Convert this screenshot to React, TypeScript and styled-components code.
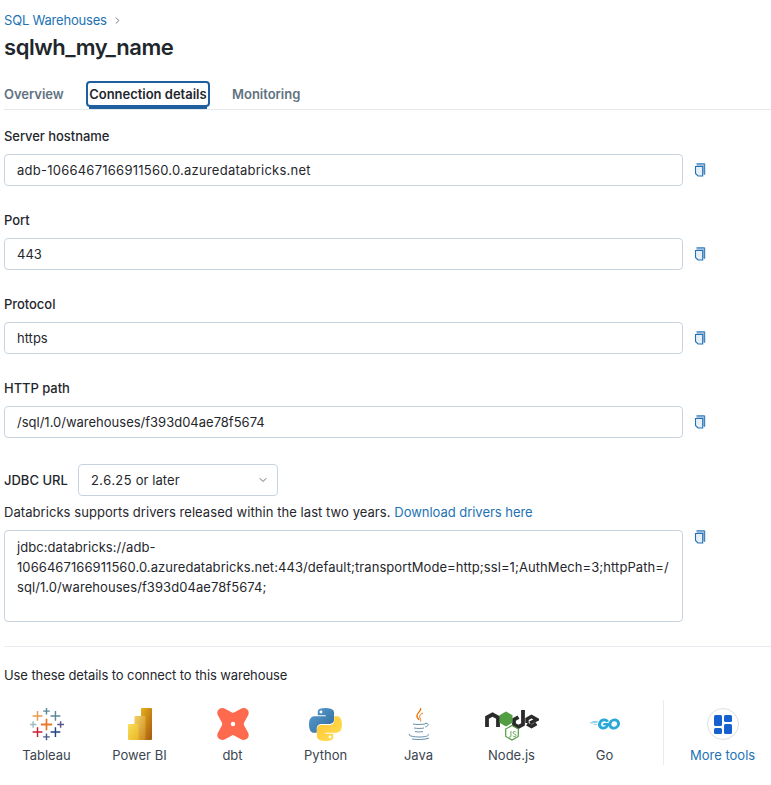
import React from "react";
import styled, { createGlobalStyle } from "styled-components";
import { SiGo } from "react-icons/si";
import { LuChevronDown, LuChevronRight } from "react-icons/lu";

const GlobalStyle = createGlobalStyle`
  body {
    margin: 0;
    background: #fff;
    font-family: Inter, "Liberation Sans", sans-serif;
    font-size: 13px;
    color: #1f272d;
  }
`;

const Page = styled.div`
  width: 771px;
  height: 785px;
  box-sizing: border-box;
  padding: 10px 0 0 4px;
  overflow: hidden;
`;

const Crumbs = styled.div`
  display: flex;
  align-items: center;
  gap: 5px;
  height: 20px;
  line-height: 20px;
  letter-spacing: -0.2px;
  color: #2272b4;
  svg {
    color: #5f7281;
  }
`;

const Title = styled.h1`
  margin: 3px 0 0;
  font-size: 22px;
  line-height: 28px;
  font-weight: 600;
  letter-spacing: -0.45px;
  color: #1f272d;
`;

const Tabs = styled.div`
  display: flex;
  gap: 25.5px;
  height: 29px;
  margin-top: 19px;
  border-bottom: 1px solid #e4e9ed;
`;

const Tab = styled.div<{ $active?: boolean }>`
  position: relative;
  height: 29px;
  line-height: 28px;
  font-weight: 600;
  letter-spacing: -0.02px;
  color: ${(p) => (p.$active ? "#1f272d" : "#5f7281")};
  ${(p) =>
    p.$active &&
    `
    &::before {
      content: "";
      position: absolute;
      left: -3px;
      right: -3px;
      top: 1px;
      height: 26px;
      box-sizing: border-box;
      border: 2px solid #1f5fa0;
      border-radius: 4px;
    }
    &::after {
      content: "";
      position: absolute;
      left: 0;
      right: 0;
      bottom: 0;
      height: 3px;
      background: #1f5fa0;
    }
  `}
`;

const Form = styled.div`
  margin-top: 16px;
`;

const Field = styled.div`
  margin-bottom: 24px;
`;

const Label = styled.div`
  line-height: 20px;
  font-weight: 500;
  letter-spacing: -0.05px;
  margin-bottom: 8px;
`;

const Row = styled.div`
  display: flex;
  align-items: flex-start;
  gap: 11px;
`;

const Input = styled.div<{ $tracking?: number }>`
  box-sizing: border-box;
  width: 679px;
  height: 32px;
  padding: 0 12px;
  line-height: 30px;
  letter-spacing: ${(p) => p.$tracking ?? 0}px;
  border: 1px solid #c7d3de;
  border-radius: 4px;
`;

const TextArea = styled.div`
  box-sizing: border-box;
  width: 679px;
  height: 92px;
  padding: 6px 12px;
  line-height: 20px;
  letter-spacing: 0.07px;
  border: 1px solid #c7d3de;
  border-radius: 4px;
`;

const CopyButton = styled.span`
  display: flex;
  width: 12px;
  height: 32px;
  align-items: center;
`;

const CopyTop = styled(CopyButton)`
  height: 14px;
`;

const JdbcRow = styled.div`
  display: flex;
  align-items: center;
  gap: 10px;
  height: 32px;
  margin-top: 26px;
  font-weight: 500;
`;

const Select = styled.div`
  box-sizing: border-box;
  width: 200px;
  height: 32px;
  padding: 0 8px 0 12px;
  display: flex;
  align-items: center;
  justify-content: space-between;
  font-weight: 400;
  font-variant-numeric: tabular-nums;
  letter-spacing: 0.1px;
  border: 1px solid #c7d3de;
  border-radius: 4px;
  svg {
    color: #5f7281;
  }
`;

const Hint = styled.div`
  margin: 6px 0 8px;
  line-height: 20px;
  letter-spacing: 0.06px;
`;

const Link = styled.span`
  color: #2272b4;
  letter-spacing: -0.03px;
`;

const Divider = styled.div`
  height: 1px;
  margin: 24px 0 18px;
  width: 767px;
  background: #e8ecf0;
`;

const Caption = styled.div`
  line-height: 20px;
  letter-spacing: -0.09px;
`;

const Tools = styled.div`
  display: flex;
  margin: 15px 0 0 -4px;
  height: 65px;
`;

const Tool = styled.div`
  width: 93px;
  display: flex;
  flex-direction: column;
  align-items: center;
  color: #3b4650;
  line-height: 20px;
  padding-top: 8px;
  box-sizing: border-box;
`;

const Logo = styled.div`
  width: 56px;
  height: 32px;
  margin-bottom: 5px;
  display: flex;
  align-items: center;
  justify-content: center;
`;

const MoreTool = styled(Tool)`
  width: auto;
  margin-left: 12px;
  padding-left: 26px;
  border-left: 1px solid #e8ecf0;
  color: #2272b4;
`;

function CopyIcon() {
  return (
    <svg width="12" height="14" viewBox="0 0 12 14">
      <path d="M2.5 1h8v10.5h-2V3H2.5z" fill="#9fc0e0" />
      <path d="M2.5.8h8.2v11" fill="none" stroke="#2272b4" strokeWidth="1" />
      <path d="M1.5 3.5h7.2v9.500H4L1.5 10.500z" fill="#e6eff7" stroke="#2272b4" strokeWidth="1.100" />
    </svg>
  );
}

const crosses: [number, number, number, string][] = [
  [16, 16, 11, "#e8762d"],
  [7.3, 7.7, 9.5, "#eb9a4b"],
  [16, 3, 6.5, "#5b879b"],
  [24.7, 7.7, 9.5, "#5b879b"],
  [3, 16, 6.5, "#9fbdc9"],
  [29.7, 16, 6.5, "#59578e"],
  [7.3, 23.3, 9.5, "#c72035"],
  [24.7, 23.3, 9.5, "#1f447e"],
  [16, 28, 6.5, "#4e5b8a"]
];

function TableauLogo() {
  return (
    <svg width="34" height="33" viewBox="0 0 33 32">
      {crosses.map(([x, y, s, c], i) => (
        <path key={i} d={`M${x - s / 2} ${y}H${x + s / 2}M${x} ${y - s / 2}V${y + s / 2}`} stroke={c} strokeWidth={s > 10 ? 1.7 : 1.4} />
      ))}
    </svg>
  );
}

function PowerBiLogo() {
  return (
    <svg width="24" height="32" viewBox="0 0 24 32">
      <defs>
        <linearGradient id="pb1" x1="0" y1="0" x2="1" y2="1">
          <stop offset="0" stopColor="#e8b21a" />
          <stop offset="1" stopColor="#a5580f" />
        </linearGradient>
        <linearGradient id="pb2" x1="0" y1="0" x2="1" y2="1">
          <stop offset="0" stopColor="#f3d267" />
          <stop offset="1" stopColor="#cc8a1c" />
        </linearGradient>
        <linearGradient id="pb3" x1="0" y1="0" x2="1" y2="1">
          <stop offset="0" stopColor="#f8de5a" />
          <stop offset="1" stopColor="#e8b724" />
        </linearGradient>
      </defs>
      <rect x="13" y="0" width="11" height="32" rx="1" fill="url(#pb1)" />
      <rect x="6.4" y="8" width="11" height="24" rx="1" fill="url(#pb2)" />
      <rect x="0" y="16" width="10.6" height="16" rx="1" fill="url(#pb3)" />
    </svg>
  );
}

function DbtLogo() {
  return (
    <svg width="32" height="32" viewBox="0 0 32 32">
      <path
        fill="#fe6a4d"
        d="M2 1.200C4-.4 6.600 0 8.500 1L15 4.600c.7.4 1.400.4 2 0L23.500 1c1.900-1 4.500-1.400 6.500.2 1.900 1.800 2.200 4.400 1 6.300L27.400 14c-.8 1.300-.8 2.700 0 4l3.600 6.500c1.200 1.900.9 4.500-1 6.300-2 1.600-4.600 1.200-6.500.2L17 27.400c-.6-.4-1.300-.4-2 0L8.500 31c-1.900 1-4.500 1.400-6.500-.2-1.900-1.800-2.200-4.400-1-6.300L4.600 18c.8-1.300.8-2.700 0-4L1 7.500C-.2 5.600.1 3 2 1.200z"
      />
      <circle cx="16" cy="16" r="2.200" fill="#fff" />
    </svg>
  );
}

function PythonLogo() {
  const half = "M15.900 0C8 0 8.500 3.400 8.500 3.400V7h7.700v1.100H5.400S0 7.500 0 15.900s4.700 8.100 4.700 8.100h2.800v-3.900s-.2-4.700 4.600-4.700h7.700s4.500.1 4.500-4.300V4.500S25.100 0 15.900 0zM11.600 2.500a1.400 1.400 0 1 1 0 2.800 1.400 1.400 0 0 1 0-2.800z";
  return (
    <svg width="33" height="33" viewBox="0 0 32 32">
      <defs>
        <linearGradient id="py1" x1="0" y1="0" x2="1" y2="1">
          <stop offset="0" stopColor="#5a9fd4" />
          <stop offset="1" stopColor="#306998" />
        </linearGradient>
        <linearGradient id="py2" x1="0" y1="0" x2="1" y2="1">
          <stop offset="0" stopColor="#ffe052" />
          <stop offset="1" stopColor="#ffc331" />
        </linearGradient>
      </defs>
      <path d={half} fill="url(#py1)" fillRule="evenodd" />
      <path d={half} fill="url(#py2)" fillRule="evenodd" transform="rotate(180 16 16)" />
    </svg>
  );
}

function JavaLogo() {
  return (
    <svg width="24" height="32" viewBox="0 0 24 32" fill="none">
      <path d="M13.500 0c1.500 3-4.500 5-3.500 8.500.4 1.400 1.500 2.500 2 3.500" stroke="#e76f00" strokeWidth="1.300" />
      <path d="M16 5c-3 1.500-4 3-3 5 .6 1 1 2 .5 3.500" stroke="#e76f00" strokeWidth="1" />
      <g stroke="#5382a1" strokeWidth="0.900">
        <path d="M6 16c3 .6 9 .6 12 0" />
        <path d="M18 15.500c2-.6 4 .4 2.800 2-.5.8-1.500 1.200-2.500 1.500" />
        <path d="M7 20c3 .6 7 .6 10 0" />
        <path d="M8 23.500c3 .6 6 .6 8 0" />
        <path d="M3 26c-3 1.500 3 3 9 3s11-1 9-3" />
        <path d="M5 31c5 .9 12 .7 17-.8" />
      </g>
    </svg>
  );
}

function NodeLogo() {
  return (
    <svg width="54" height="33" viewBox="0 0 54 33" fill="none">
      <g stroke="#2b2b2b" strokeWidth="3.800">
        <path d="M2 19V9.500L7.500 6.500 13 9.500V19" />
        <path d="M33.500 9.200 29 11.700v4.600l4.500 2.500 4.500-2.500V2" />
      </g>
      <path d="M21 3.500 27.500 7.200v7.600L21 18.500 14.500 14.800V7.200z" fill="#539e43" />
      <path d="M42 16l4.500 2.500 5-2.800M42 15v-4l4.500-2.500 5.500 3-7 3.600" stroke="#2b2b2b" strokeWidth="3.400" />
      <path d="M27 17.500l6.300 3.600v7.300L27 32l-6.300-3.600v-7.300z" stroke="#539e43" strokeWidth="1.200" />
      <path d="M25.900 23v5.200c0 1-1.300 1.200-1.800.6M31 24.400c-.5-1.200-3-1.300-3 .3s3 1 3 2.700-2.600 1.500-3.200.4" stroke="#539e43" strokeWidth="0.900" />
    </svg>
  );
}

function MoreToolsLogo() {
  return (
    <svg width="32" height="32" viewBox="0 0 32 32">
      <circle cx="16" cy="16" r="15.500" fill="#fff" stroke="#dcdfe2" />
      <rect x="7" y="7" width="8" height="11" rx="1.500" fill="#1660d0" />
      <rect x="17" y="7" width="8" height="7" rx="1.500" fill="#1660d0" />
      <rect x="7" y="20" width="8" height="6" rx="1.500" fill="#1660d0" />
      <rect x="17" y="16" width="8" height="10" rx="1.500" fill="#1660d0" />
    </svg>
  );
}

const fields = [
  { label: "Server hostname", value: "adb-1066467166911560.0.azuredatabricks.net", tracking: 0.24 },
  { label: "Port", value: "443" },
  { label: "Protocol", value: "https" },
  { label: "HTTP path", value: "/sql/1.0/warehouses/f393d04ae78f5674" }
];

const tools = [
  { name: "Tableau", logo: <TableauLogo /> },
  { name: "Power BI", logo: <PowerBiLogo /> },
  { name: "dbt", logo: <DbtLogo /> },
  { name: "Python", logo: <PythonLogo /> },
  { name: "Java", logo: <JavaLogo /> },
  { name: "Node.js", logo: <NodeLogo /> },
  { name: "Go", logo: <SiGo size={30} color="#29a9d8" /> }
];

export default function App() {
  return (
    <Page>
      <GlobalStyle />
      <Crumbs>
        SQL Warehouses <LuChevronRight size={11} />
      </Crumbs>
      <Title>sqlwh_my_name</Title>
      <Tabs>
        <Tab>Overview</Tab>
        <Tab $active>Connection details</Tab>
        <Tab>Monitoring</Tab>
      </Tabs>
      <Form>
        {fields.map((f) => (
          <Field key={f.label}>
            <Label>{f.label}</Label>
            <Row>
              <Input $tracking={f.tracking}>{f.value}</Input>
              <CopyButton>
                <CopyIcon />
              </CopyButton>
            </Row>
          </Field>
        ))}
        <JdbcRow>
          JDBC URL
          <Select>
            2.6.25 or later <LuChevronDown size={12} />
          </Select>
        </JdbcRow>
        <Hint>
          Databricks supports drivers released within the last two years. <Link>Download drivers here</Link>
        </Hint>
        <Row>
          <TextArea>
            jdbc:databricks://adb-
            <br />
            1066467166911560.0.azuredatabricks.net:443/default;transportMode=http;ssl=1;AuthMech=3;httpPath=/
            <br />
            sql/1.0/warehouses/f393d04ae78f5674;
          </TextArea>
          <CopyTop>
            <CopyIcon />
          </CopyTop>
        </Row>
      </Form>
      <Divider />
      <Caption>Use these details to connect to this warehouse</Caption>
      <Tools>
        {tools.map((t) => (
          <Tool key={t.name}>
            <Logo>{t.logo}</Logo>
            {t.name}
          </Tool>
        ))}
        <MoreTool>
          <Logo>
            <MoreToolsLogo />
          </Logo>
          More tools
        </MoreTool>
      </Tools>
    </Page>
  );
}
